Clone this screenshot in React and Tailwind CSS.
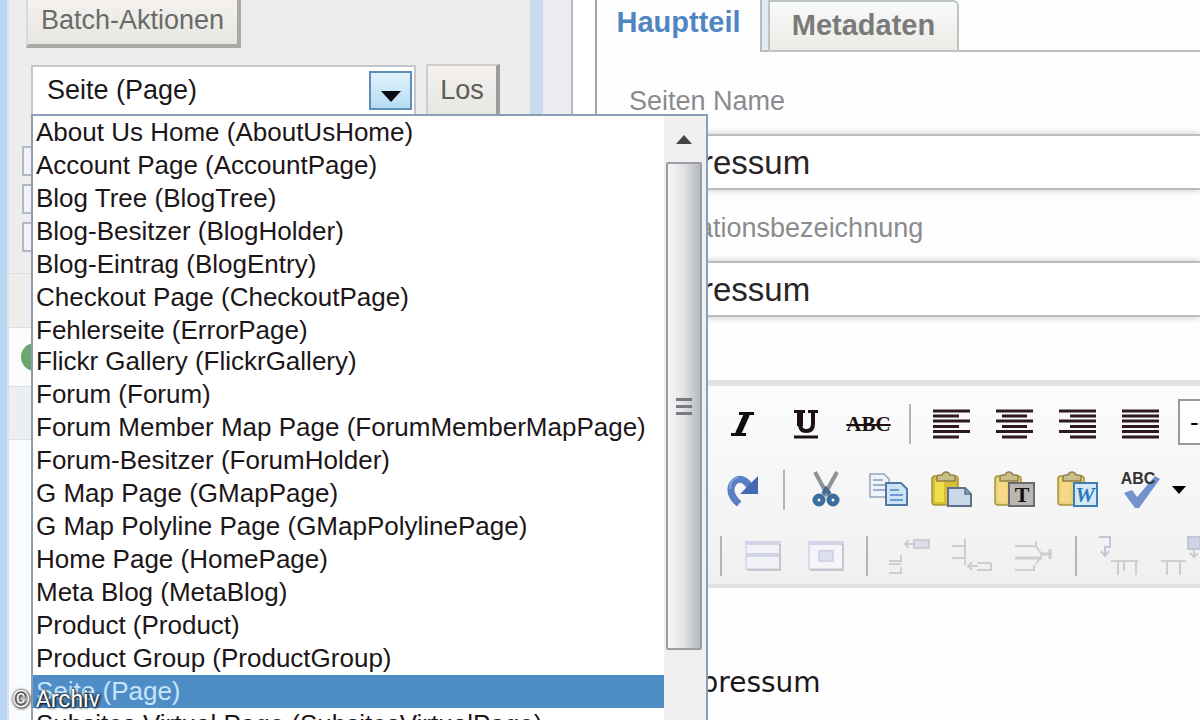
const pageTypes = [
    'About Us Home (AboutUsHome)',
    'Account Page (AccountPage)',
    'Blog Tree (BlogTree)',
    'Blog-Besitzer (BlogHolder)',
    'Blog-Eintrag (BlogEntry)',
    'Checkout Page (CheckoutPage)',
    'Fehlerseite (ErrorPage)',
    'Flickr Gallery (FlickrGallery)',
    'Forum (Forum)',
    'Forum Member Map Page (ForumMemberMapPage)',
    'Forum-Besitzer (ForumHolder)',
    'G Map Page (GMapPage)',
    'G Map Polyline Page (GMapPolylinePage)',
    'Home Page (HomePage)',
    'Meta Blog (MetaBlog)',
    'Product (Product)',
    'Product Group (ProductGroup)',
    'Seite (Page)',
    'Subsites Virtual Page (SubsitesVirtualPage)',
];

const selectedType = 'Seite (Page)';

function ToolButton({ label, children }) {
    return (
        <button type="button" aria-label={label} className="flex w-[63px] h-12 shrink-0 items-center justify-center">
            {children}
        </button>
    );
}

function Separator() {
    return (
        <div className="flex w-5 shrink-0 justify-center">
            <div className="w-0.5 h-10 bg-[#b4b4b4]"></div>
        </div>
    );
}

// Every second line is shortened to the given [start, end]
function AlignIcon({ short }) {
    return (
        <svg width="37" height="32" viewBox="0 0 37 32" fill="none" stroke="#2e1a1c" strokeWidth="3">
            <path d="M0 3H37M0 13H37M0 23.500H37" />
            <path d={`M${short[0]} 8H${short[1]}M${short[0]} 18.500H${short[1]}M${short[0]} 29H${short[1]}`} />
        </svg>
    );
}

function Clipboard({ pale, children }) {
    return (
        <svg width="42" height="38" viewBox="0 0 42 38">
            <rect x="1" y="5" width="26" height="29" rx="3" fill={pale ? '#e9d27a' : '#d3c034'} stroke="#a8923c" strokeWidth="1.500" />
            <rect x="4" y="9" width="9" height="22" fill={pale ? '#f5d986' : '#f0e14a'} />
            <path d="M6 10V5Q6 4 9 4H11Q12 1 15 1T19 4H21Q24 4 24 5V10Z" fill="#c9bf8a" stroke="#8f8145" strokeWidth="1.500" />
            {children}
        </svg>
    );
}

function SheetText({ letter, className }) {
    return (
        <text x="28" y="31" textAnchor="middle" fontSize="22" fontWeight="bold" className={className}>
            {letter}
        </text>
    );
}

function Toolbar() {
    return (
        <div className="border border-r-0 border-[#cfcfcf] border-t-[6px] border-t-[#e3e3e3] border-b-4 border-b-[#e3e3e3] bg-linear-to-b from-[#fcfcfc] to-[#f0f0f0] pl-[18px] pt-3.5 pb-1 overflow-hidden">
            <div className="flex items-center h-12">
                <ToolButton label="Fett">
                    <span className="font-['Liberation_Serif',serif] text-[32px] font-bold">B</span>
                </ToolButton>
                <ToolButton label="Kursiv">
                    <svg width="26" height="26" viewBox="0 0 26 26" stroke="#120c0e" fill="none">
                        <path d="M9 2.500H24M1 23.500H16" strokeWidth="3" />
                        <path d="M17 3L8 23" strokeWidth="6" />
                    </svg>
                </ToolButton>
                <ToolButton label="Unterstrichen">
                    <svg width="26" height="30" viewBox="0 0 26 30" stroke="#1c1012" fill="none">
                        <path d="M1 2.500H12M15 2.500H25M1 28H25" strokeWidth="3" />
                        <path d="M7 2V15Q7 22 13 22Q20 22 20 15V2" strokeWidth="4" />
                        <path d="M7 2V17" strokeWidth="6" />
                    </svg>
                </ToolButton>
                <ToolButton label="Durchgestrichen">
                    <span className="font-['Liberation_Serif',serif] text-[21px] leading-6 font-bold text-[#1c1012] line-through decoration-2">ABC</span>
                </ToolButton>
                <Separator />
                <ToolButton label="Linksbündig"><AlignIcon short={[0, 26]} /></ToolButton>
                <ToolButton label="Zentriert"><AlignIcon short={[6, 31]} /></ToolButton>
                <ToolButton label="Rechtsbündig"><AlignIcon short={[11, 37]} /></ToolButton>
                <ToolButton label="Blocksatz"><AlignIcon short={[0, 37]} /></ToolButton>
                <select aria-label="Format" className="appearance-none ml-1.5 mb-1 w-72 h-[46px] shrink-0 border-2 border-[#999] bg-white pl-2.5 text-[26px] text-black">
                    <option>-- Format --</option>
                </select>
            </div>

            <div className="flex items-center h-12 mt-[18px]">
                <ToolButton label="Rückgängig">
                    <svg width="32" height="32" viewBox="0 0 32 32" fill="none" stroke="#4a70b8" strokeWidth="6">
                        <path d="M24 29Q32 6 16 6Q10 6 6 14" />
                    </svg>
                </ToolButton>
                <ToolButton label="Wiederholen">
                    <svg width="32" height="34" viewBox="0 0 32 34" fill="none">
                        <path d="M12 31Q1 21 5 12Q10 3 18 8Q21 10 23 14" stroke="#5a80c4" strokeWidth="7" />
                        <path d="M31 3V21H13Z" fill="#4568b4" />
                        <path d="M3 16Q3 6 11 4" stroke="#86a3d8" strokeWidth="2" />
                    </svg>
                </ToolButton>
                <Separator />
                <ToolButton label="Ausschneiden">
                    <svg width="28" height="38" viewBox="0 0 28 38" fill="none">
                        <path d="M3 1L16 25M25 1L12 25" stroke="#8d9299" strokeWidth="4" />
                        <path d="M11 23L14 18L18 23" stroke="#3e6c94" strokeWidth="4" />
                        <ellipse cx="7" cy="29" rx="4" ry="4" stroke="#3b6e9c" strokeWidth="5" />
                        <ellipse cx="21" cy="29" rx="4" ry="4" stroke="#3b6e9c" strokeWidth="5" />
                    </svg>
                </ToolButton>
                <ToolButton label="Kopieren">
                    <svg width="40" height="36" viewBox="0 0 40 36">
                        <path d="M1 2H15L20 7V25H1Z" fill="#eef3fa" stroke="#93a5bf" strokeWidth="1.500" />
                        <path d="M4 8H14M4 13H16M4 18H16" stroke="#9db0cc" strokeWidth="2" />
                        <path d="M17 11H32L38 17V33H17Z" fill="#cfe3f7" stroke="#5278a8" strokeWidth="2" />
                        <path d="M21 18H30M21 23H34M21 28H34" stroke="#6d9bcf" strokeWidth="2" />
                    </svg>
                </ToolButton>
                <ToolButton label="Einfügen">
                    <Clipboard>
                        <path d="M17 17H34L40 23V35H17Z" fill="#c9d9ea" stroke="#5e6f88" strokeWidth="2" />
                        <path d="M34 17V23H40" fill="#7f9cc0" stroke="#5e6f88" strokeWidth="1.500" />
                    </Clipboard>
                </ToolButton>
                <ToolButton label="Als Text einfügen">
                    <Clipboard pale>
                        <rect x="15" y="12" width="25" height="23" fill="#b9b6b4" stroke="#6e6b6a" strokeWidth="2" />
                        <SheetText letter="T" className="font-['Liberation_Serif',serif] fill-[#111]" />
                    </Clipboard>
                </ToolButton>
                <ToolButton label="Aus Word einfügen">
                    <Clipboard pale>
                        <rect x="17" y="12" width="23" height="23" fill="#d4e8f8" stroke="#3f7db4" strokeWidth="2" />
                        <SheetText letter="W" className="font-['Liberation_Serif',serif] italic fill-[#2d78b8]" />
                    </Clipboard>
                </ToolButton>
                <ToolButton label="Rechtschreibung">
                    <svg width="42" height="40" viewBox="0 0 42 40">
                        <path d="M4 23L12 20L17 27L35 6L40 9L19 38H15Z" fill="#7191cf" />
                        <text x="18" y="14" textAnchor="middle" fontSize="16" fontWeight="bold" className="font-['Liberation_Sans',sans-serif] fill-[#333]">ABC</text>
                    </svg>
                </ToolButton>
                <button type="button" aria-label="Sprache wählen" className="shrink-0">
                    <svg width="14" height="8" viewBox="0 0 14 8"><path d="M0 0H14L7 8Z" fill="#000" /></svg>
                </button>
            </div>

            <div className="flex items-center h-12 mt-[18px]">
                <ToolButton label="Tabelle">
                    <svg width="36" height="32" viewBox="0 0 36 32" fill="none" stroke="#c9cbdc" strokeWidth="2"><path d="M1 1H35V31H1ZM1 11H35M1 21H35M18 1V31" /></svg>
                </ToolButton>
                <Separator />
                <ToolButton label="Zeileneigenschaften">
                    <svg width="36" height="32" viewBox="0 0 36 32" fill="none" strokeWidth="2">
                        <path d="M1 2H35V29H1Z" fill="#f1f1f8" stroke="#dadbe6" />
                        <path d="M1 3H35M2 15H34" stroke="#d2d3e6" strokeWidth="4" />
                        <path d="M2 30H35V4" stroke="#c6c6cc" />
                    </svg>
                </ToolButton>
                <ToolButton label="Zelleneigenschaften">
                    <svg width="36" height="32" viewBox="0 0 36 32" fill="none" strokeWidth="2">
                        <path d="M1 2H35V29H1Z" fill="#f4f4f9" stroke="#dadbe6" />
                        <path d="M1 3H35" stroke="#d2d3e6" strokeWidth="4" />
                        <rect x="11" y="11" width="14" height="10" fill="#dddeee" stroke="#d2d3e6" />
                        <path d="M2 30H35V4" stroke="#c6c6cc" />
                    </svg>
                </ToolButton>
                <Separator />
                <ToolButton label="Zeile davor einfügen">
                    <svg width="42" height="38" viewBox="0 0 42 38" fill="none" stroke="#cdcdd2" strokeWidth="2">
                        <path d="M1 24H13V18M1 36H13V30M1 27H13" />
                        <path d="M17 7H27M21 3L17 7L21 11" />
                        <rect x="26" y="3" width="15" height="8" fill="#dcdde8" />
                    </svg>
                </ToolButton>
                <ToolButton label="Zeile danach einfügen">
                    <svg width="42" height="38" viewBox="0 0 42 38" fill="none" stroke="#cdcdd2" strokeWidth="2">
                        <path d="M1 9H14M1 21H14M14 2V28" />
                        <path d="M17 29H27M21 25L17 29L21 33" />
                        <path d="M26 26H40M26 33H40V26" />
                    </svg>
                </ToolButton>
                <ToolButton label="Zeile löschen">
                    <svg width="42" height="38" viewBox="0 0 42 38" fill="none" stroke="#cdcdd2" strokeWidth="2">
                        <path d="M1 9H22V4M1 33H20V28M22 9L28 18L22 27" />
                        <path d="M1 21H28M28 17H38M36 12V22" strokeWidth="3" />
                    </svg>
                </ToolButton>
                <Separator />
                <ToolButton label="Spalte davor einfügen">
                    <svg width="42" height="42" viewBox="0 0 42 42" fill="none" stroke="#cdcdd2" strokeWidth="2">
                        <path d="M2 2H13V12H8V20M4 16L8 21L12 16" stroke="#c4c5d6" />
                        <path d="M14 26H41M21 26V40M27 26V36M39 26V40" />
                    </svg>
                </ToolButton>
                <ToolButton label="Spalte danach einfügen">
                    <svg width="42" height="42" viewBox="0 0 42 42" fill="none" stroke="#cdcdd2" strokeWidth="2">
                        <path d="M1 26H26M7 26V40M20 26V40" />
                        <rect x="28" y="2" width="12" height="12" fill="#cfd2e8" stroke="#c4c5d6" />
                        <path d="M34 14V22M30 18L34 22L38 18" />
                    </svg>
                </ToolButton>
            </div>
        </div>
    );
}

function PageTypeList() {
    return (
        <div className="absolute left-0 top-full z-10 flex w-[677px] border-2 border-b-0 border-[#8b9fb4] bg-white">
            <ul role="listbox" aria-label="Seitentypen" className="flex-1 text-[26px] leading-[33px] text-[#1c1618] whitespace-nowrap">
                {pageTypes.map((type) => (
                    <li
                        key={type}
                        role="option"
                        aria-selected={type === selectedType}
                        className="h-[33px] pl-[3px] aria-selected:bg-[#4f8dc6] aria-selected:text-[#c5e6fb] nth-7:h-[31px]"
                    >
                        {type}
                    </li>
                ))}
            </ul>
            <div className="flex w-[42px] flex-col bg-[#f0f0f0] pl-0.5 pr-1">
                <div className="flex h-[46px] items-center justify-center">
                    <svg width="16" height="9" viewBox="0 0 16 9"><path d="M8 0L16 9H0Z" fill="#444" /></svg>
                </div>
                <div className="flex h-[488px] flex-col items-center justify-center gap-1 rounded-xs border-2 border-[#9a9ea4] bg-linear-to-r from-[#f6f6f6] via-[#e2e2e4] to-[#b4b8c0]">
                    <div className="w-4 h-[3px] bg-[#777a80]"></div>
                    <div className="w-4 h-[3px] bg-[#777a80]"></div>
                    <div className="w-4 h-[3px] bg-[#777a80]"></div>
                </div>
            </div>
        </div>
    );
}

function Sidebar() {
    return (
        <aside className="w-[521px] shrink-0 bg-[#ededee]">
            <div className="pl-[17px]">
                <button type="button" className="h-12 w-[215px] border-[#aaa9a4] border-b-4 border-r-4 border-l-2 border-l-[#d8d8d8] bg-linear-to-b from-[#f4f1ee] to-[#e6e6e0] pb-1 text-[27px] leading-8 text-[#6a6a6c]">
                    Batch-Aktionen
                </button>
            </div>

            <div className="mt-4 flex items-end pl-[22px]">
                <div className="relative w-[385px]">
                    <select aria-label="Seitentyp" className="block h-[49px] w-full appearance-none border-2 border-b-0 border-[#c3c6ca] bg-white pl-3.5 text-[27px] text-[#1c1618]">
                        <option>{selectedType}</option>
                    </select>
                    <div className="pointer-events-none absolute right-1 top-1.5 flex h-[39px] w-[43px] items-end justify-center border-2 border-[#5e8fb4] bg-linear-to-b from-[#e2f3fc] to-[#b4dcf2] pb-1.5">
                        <svg width="20" height="11" viewBox="0 0 20 11"><path d="M0 0H20L10 11Z" fill="#0c0c10" /></svg>
                    </div>
                    <PageTypeList />
                </div>
                <button type="button" className="ml-2.5 h-[50px] w-[74px] border-2 border-b-0 border-r-4 border-[#cfccc9] border-r-[#9c9c9c] bg-linear-to-b from-[#f4f1ef] to-[#e6e6e2] text-[27px] text-[#5c5c5e]">
                    Los
                </button>
            </div>

            {/* Seitenbaum */}
            <div className="flex h-40 flex-col gap-2 border-b border-[#dcdcdc] pl-[13px] pt-8">
                <input type="checkbox" aria-label="Seite 1" className="size-[30px] appearance-none border-2 border-[#b4b8c0] bg-[#f2f2f4]" />
                <input type="checkbox" aria-label="Seite 2" className="size-[30px] appearance-none border-2 border-[#b4b8c0] bg-[#f2f2f4]" />
                <input type="checkbox" aria-label="Seite 3" className="size-[30px] appearance-none border-2 border-[#b4b8c0] bg-[#f2f2f4]" />
            </div>
            <div className="h-[54px] border-b border-[#dcdcdc] bg-[#efedec]"></div>
            <div className="flex h-[58px] items-center bg-[#fbfcfb] pl-3">
                <div className="size-7 rounded-full bg-[#6da570]"></div>
            </div>
            <div className="h-[54px] border-y border-[#dcdfe6] bg-[#eceef3]"></div>
            <div className="h-96 bg-[#fafbfc]"></div>
        </aside>
    );
}

function Field({ id, label }) {
    return (
        <div className="flex flex-col">
            <label htmlFor={id} className="flex h-[71px] items-center pt-1.5 text-[27px] text-[#8b8b8e]">{label}</label>
            <input
                id={id}
                type="text"
                defaultValue="Impressum"
                className="h-14 border-2 border-r-0 border-[#bcbcbc] bg-white pl-4 pt-0.5 text-[33px] text-[#2a2426] shadow-[0_0_7px_#c4c4c4]"
            />
        </div>
    );
}

export default function App() {
    return (
        <div className="relative flex h-screen overflow-hidden bg-white font-['Liberation_Sans',Arial,sans-serif]">
            <div className="w-[9px] shrink-0 border-r-2 border-[#d5e3f0] bg-[#b9d6f2]"></div>
            <Sidebar />
            <div className="w-[13px] shrink-0 bg-[#c9daef]"></div>
            <div className="w-7 shrink-0 bg-[#ebebf0]"></div>

            <main className="flex min-w-0 flex-1 border-l-2 border-[#b9b9bd] pl-[22px]">
                <div className="min-w-0 flex-1 border-l-2 border-[#a4a4a8] bg-[#fefefe]">
                    <div role="tablist" className="flex h-[52px] text-[29px] font-bold">
                        <button type="button" role="tab" aria-selected="true" className="w-[165px] border-r-2 border-[#b4bcc0] pb-1.5 text-[#4f86c2]">Hauptteil</button>
                        <div className="w-1.5 border-b-2 border-[#bdbdbd] bg-[#e2ebef]"></div>
                        <button type="button" role="tab" aria-selected="false" className="w-[191px] rounded-tr-md border-2 border-[#bcc4c2] bg-linear-to-b from-[#f8fafa] to-[#ebebe6] text-[#7a7a7a]">Metadaten</button>
                        <div className="flex-1 border-b-2 border-[#bdbdbd]"></div>
                    </div>

                    <form className="pl-8 pt-[11px]">
                        <Field id="seitenname" label="Seiten Name" />
                        <Field id="navigation" label="Navigationsbezeichnung" />
                        <div className="mt-[63px]">
                            <Toolbar />
                            <p className="pl-9 pt-[77px] font-['DejaVu_Sans',sans-serif] text-[28px] leading-9 text-[#1c1618]">Impressum</p>
                        </div>
                    </form>
                </div>
            </main>

            <p className="absolute bottom-1 left-3 z-20 font-[Roboto,sans-serif] text-[23px] leading-8 text-white [text-shadow:0_0_3px_#000,1px_1px_3px_#000]">© Archiv</p>
        </div>
    );
}
